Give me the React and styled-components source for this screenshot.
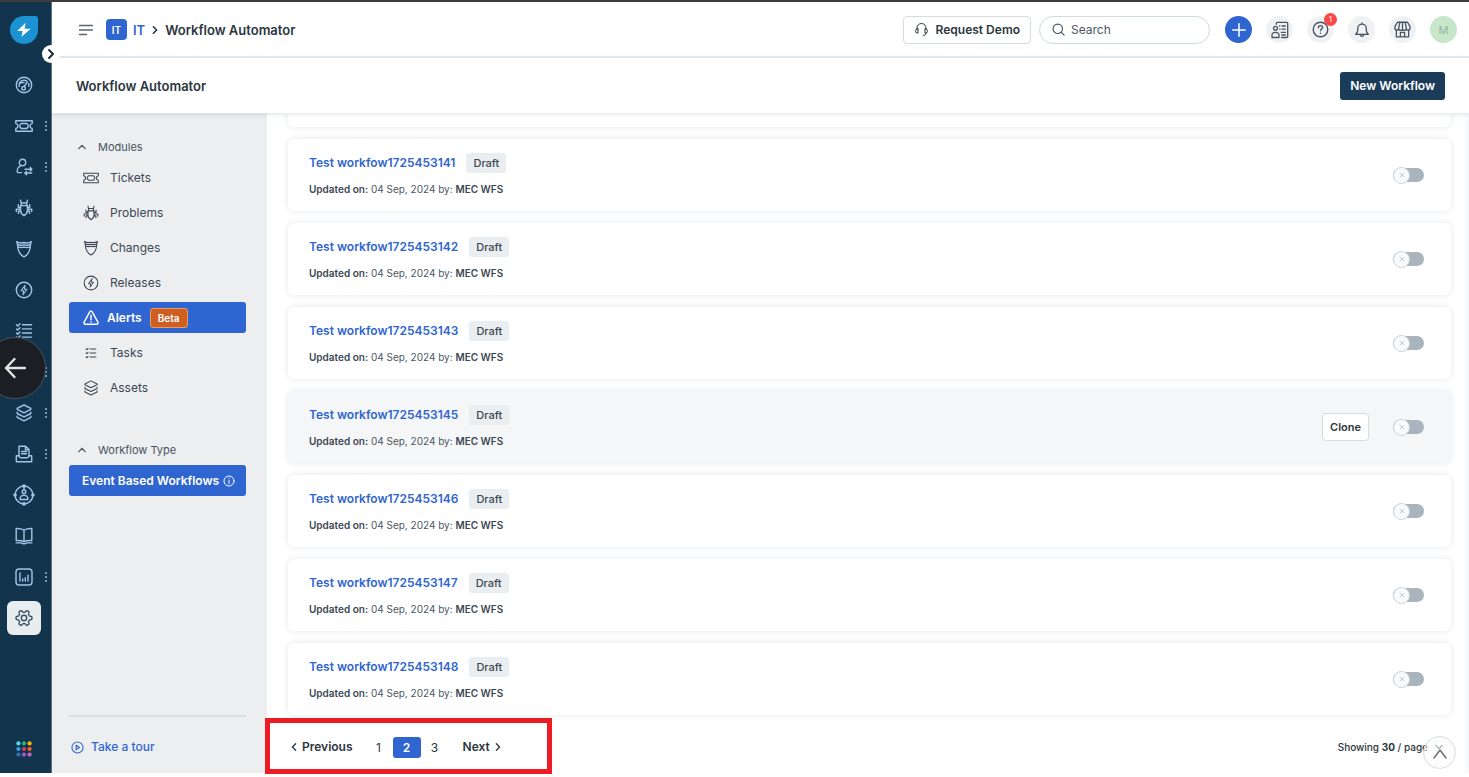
import React from "react";
import styled, { createGlobalStyle, css } from "styled-components";

const GlobalStyle = createGlobalStyle`
  *, *::before, *::after { box-sizing: border-box; }
  body {
    margin: 0;
    background: #fff;
    color: #2b3640;
    font-family: Inter, "Liberation Sans", sans-serif;
    font-size: 12px;
    line-height: 16px;
  }
  button, input { font: inherit; color: inherit; }
  button { cursor: pointer; padding: 0; margin: 0; border: 0; background: none; }
  a { text-decoration: none; color: inherit; }
  svg { display: block; flex: none; }
`;

const blue = "#2f65d0";
const navy = "#12344d";

/* ---------- icons ---------- */

const Svg = ({ size = 18, box = 18, w = 1.4, children, ...rest }) => (
  <svg
    width={size}
    height={size}
    viewBox={`0 0 ${box} ${box}`}
    fill="none"
    stroke="currentColor"
    strokeWidth={w}
    strokeLinecap="round"
    strokeLinejoin="round"
    aria-hidden="true"
    {...rest}
  >
    {children}
  </svg>
);

/* six rounded teeth around the centre of an 18-unit box */
const gearOutline = Array.from({ length: 120 }, (_, i) => {
  const a = (i / 120) * Math.PI * 2;
  const r = 6.8 + 1.2 * Math.tanh(2.4 * Math.cos(6 * a));
  return `${(9 + r * Math.cos(a)).toFixed(2)},${(9 + r * Math.sin(a)).toFixed(2)}`;
}).join(" ");

const shapes = {
  gauge: (
    <>
      <circle cx="9" cy="9" r="7.700" />
      <path d="M4.300 10.400A5 5 0 0 1 4.300 7.600 5 5 0 0 1 12 5.200M13.700 7.400a5 5 0 0 1 0 3M4.300 7.600c1.300-.9 3-1.200 4.700-1" />
      <circle cx="8.600" cy="12.300" r="1.800" />
      <path d="M9.300 10.500 12.200 6.200" />
    </>
  ),
  ticket: (
    <>
      <path d="M.8 3.700h16.400v2.700c-1.700.6-2.200 1.500-2.200 2.600s.5 2 2.200 2.600v2.700H.8v-2.700C2.500 11 3 10.100 3 9s-.5-2-2.200-2.600z" />
      <path d="M6 6.500h6c.1.700.5 1.100 1.100 1.300v2.400c-.6.2-1 .6-1.100 1.300H6c-.1-.7-.5-1.100-1.100-1.300V7.800C5.500 7.600 5.900 7.200 6 6.500z" />
    </>
  ),
  userSwap: (
    <>
      <circle cx="7.500" cy="4.400" r="3.200" />
      <path d="M6.300 7.600C3.700 8.400 2.200 10.600 2.200 13.400c0 .9.300 1.200 1 1.200h3.300" />
      <path d="M10 11.300h6.700M15.200 9.500l1.700 1.800-1.700 1.700M16.700 15H10M11.500 13.400 9.800 15l1.700 1.700" />
    </>
  ),
  bug: (
    <>
      <path d="M5.500 6.600h7v4.800c0 2.200-1.500 3.900-3.500 5.200-2-1.300-3.500-3-3.500-5.200z" />
      <path d="M6.200 6.500V4h5.600v2.500M6.200 4 5.600 1.300M11.800 4l.6-2.700" />
      <path d="M5.500 8.300H3.300V5.700M12.500 8.300h2.200V5.700M5.500 10.200H1.300v2.300M12.500 10.200h4.200v2.300M5.700 12.200H3.500v2.200M12.300 12.200h2.200v2.200" />
    </>
  ),
  shield: (
    <>
      <path d="M1.700 1.700C4 3 6.600 3.300 9 2.500c2.400.8 5 .5 7.300-.8-.3 1.200-.8 2-.9 3.300-.1 4.800-1.500 9.300-6.400 11.800C4.100 14.300 2.700 9.800 2.600 5c-.1-1.300-.6-2.100-.9-3.300z" />
      <path d="M2.500 4.500c2.200.8 4.400.9 6.500.3 2.100.6 4.300.5 6.500-.3M2.800 6.800c2.100.8 4.200.9 6.200.3 2 .6 4.100.5 6.200-.3" />
    </>
  ),
  bolt: (
    <>
      <circle cx="9" cy="9" r="7.700" />
      <path d="M10 4.300 6.100 9.800h2.500L8 13.700l3.900-5.500H9.400z" strokeWidth="1.100" />
    </>
  ),
  tasks: (
    <path d="M7.500 2.800h9M7.500 6.900h9M7.500 11h9M7.500 15.100h9M1.500 2.800l1.200 1.200L5 1.700M1.500 6.900l1.200 1.200L5 5.800M1.500 11l1.200 1.200L5 9.900M1.500 15.100l1.200 1.200L5 14" />
  ),
  taskLines: (
    <path d="M8 4.500h6.500M8 9h6.500M8 13.500h6.500M3.500 4.500l.8.800 1.400-1.500M3.500 9l.8.800 1.400-1.500M3.500 13.500l.8.800 1.400-1.500" />
  ),
  layers: (
    <>
      <path d="M9 1 15.800 4.400v1L9 8.800 2.200 5.400v-1z" />
      <path d="M2.200 8.300v1.200L9 12.900l6.800-3.400V8.300M2.200 12.200v1.200L9 16.900l6.800-3.500v-1.200" />
    </>
  ),
  printer: (
    <>
      <path d="M4 10.800V1.200h6.600L14 4.600v6.200M10.400 1.400v3.400h3.400M6.500 6.500h5M6.500 8.800h5" />
      <path d="M4 10.800H1.300v6h15.400v-6H14c-.2 1.300-.8 1.900-2 1.900H6c-1.200 0-1.900-.6-2-1.900z" />
    </>
  ),
  target: (
    <>
      <circle cx="9" cy="9" r="7.300" />
      <circle cx="9" cy="6.400" r="1.500" />
      <path d="M5.900 12.600v-.8c0-1.500 1.200-2.500 3.100-2.500s3.100 1 3.100 2.500v.8z" />
      <path d="M9 3.200v1" />
      <circle cx="9" cy="1.700" r=".9" fill="currentColor" />
      <circle cx="9" cy="16.300" r=".9" fill="currentColor" />
      <circle cx="1.700" cy="9" r=".9" fill="currentColor" />
      <circle cx="16.300" cy="9" r=".9" fill="currentColor" />
    </>
  ),
  book: (
    <>
      <path d="M9 3c-2-1.100-4.700-1.600-7.800-1.500v12c3.100-.1 5.800.2 7.800 1.200 2-1 4.700-1.300 7.800-1.200v-12C13.700 1.400 11 1.900 9 3zM9 3v11.500" />
      <path d="M1.200 15.900h5.600c.5 1.200 3.900 1.200 4.400 0h5.600" />
    </>
  ),
  chart: (
    <>
      <rect x="1" y="1" width="16" height="16" rx="3" />
      <path d="M5 5v8M7.700 11v2M10.300 9.800V13M13 7.200V13" />
    </>
  ),
  gear: (
    <>
      <circle cx="9" cy="9" r="2.700" />
      <polygon points={gearOutline} />
    </>
  ),
  warning: (
    <>
      <path d="M7.600 2.100 1.300 13.700c-.6 1.200 0 2.300 1.300 2.300h12.800c1.300 0 1.900-1.100 1.300-2.300L10.400 2.100c-.6-1.100-2.200-1.100-2.800 0z" />
      <path d="M9 6v5M9 13.200v.2" />
    </>
  ),
  headset: (
    <>
      <path d="M3.600 9V7.200a5.400 5.400 0 0 1 10.800 0V9" />
      <path d="M4.800 8.300v5H4a2.100 2.100 0 0 1-2.100-2.100v-.8A2.100 2.100 0 0 1 4 8.300zM13.200 8.300v5h.8a2.100 2.100 0 0 0 2.100-2.100v-.8A2.100 2.100 0 0 0 14 8.300zM14.400 13.300c0 1.800-1.200 2.700-3.400 2.700" />
    </>
  ),
  search: (
    <>
      <circle cx="8" cy="8" r="6.500" />
      <path d="m12.800 12.800 4 4" />
    </>
  ),
  plus: <path d="M9 2v14M2 9h14" />,
  contacts: (
    <>
      <path d="M5.300 3.300V2.500c0-.8.400-1.200 1.200-1.200h9c.8 0 1.200.4 1.200 1.200v12.800c0 .8-.4 1.200-1.200 1.200h-5" />
      <circle cx="4.500" cy="7.300" r="2" />
      <path d="M1 16.500v-2.200c0-1.800 1.300-3 3.500-3s3.500 1.200 3.500 3v2.200zM8.500 5h.3M11 5h3.300M8.800 8.200h.3M11 8.200h3.300M10.300 11.400h4M10.800 14h3.500" />
    </>
  ),
  help: (
    <>
      <circle cx="9" cy="9" r="7.700" />
      <path d="M6.800 7.100c0-1.300 1-2.200 2.200-2.200s2.200.8 2.200 2C11.200 8.400 9 8.500 9 10.300M9 12.900v.2" />
    </>
  ),
  bell: (
    <path d="M9 1v1.300M1.900 13.900h14.200c-1.500-1.400-2.300-2.600-2.300-5V7.200a4.800 4.800 0 0 0-9.600 0v1.700c0 2.400-.8 3.600-2.300 5zM7 14.200a2 2 0 0 0 4 0" />
  ),
  store: (
    <>
      <path d="M3.600 1.300h10.800L17 6v1.300a2 2 0 0 1-4 .6 2 2 0 0 1-4 0 2 2 0 0 1-4 0 2 2 0 0 1-4-.6V6zM6.200 1.300 5 7.500M11.800 1.300 13 7.500M9 1.300v6.200" />
      <path d="M2.500 9.800v7h13v-7M6.800 16.800V12h4.400v4.800" />
    </>
  ),
  play: (
    <>
      <circle cx="9" cy="9" r="7.700" />
      <path d="M7 5.800 12 9l-5 3.200z" />
    </>
  ),
  info: (
    <>
      <circle cx="9" cy="9" r="7.500" />
      <path d="M9 8.300V13M9 5.200v.3" />
    </>
  ),
};

const Icon = ({ name, ...rest }) => <Svg {...rest}>{shapes[name]}</Svg>;

const chevrons = {
  right: "m3 1 4 4-4 4",
  left: "M7 1 3 5l4 4",
  up: "m1 7 4-4 4 4",
  down: "m1 3 4 4 4-4",
};
const Chevron = ({ dir, size = 8, w = 1.6 }) => (
  <Svg size={size} box={10} w={w}>
    <path d={chevrons[dir]} />
  </Svg>
);

const LogoMark = () => (
  <svg width="28" height="28" viewBox="0 0 28 28" aria-hidden="true">
    <path d="M14 0h11a3 3 0 0 1 3 3v11A14 14 0 1 1 14 0z" fill="#1b93d3" />
    <path d="M15.600 6.800 7.200 15h5.400l-1.200 6L20.600 12.800h-6z" fill="#fff" />
  </svg>
);

const appDots = ["#4be0e6", "#21b573", "#ffb400", "#3c9df0", "#e43d57", "#f26522", "#2f6fb5", "#a557c9", "#c65fd0"];
const AppGrid = () => (
  <svg width="16" height="16" viewBox="0 0 16 16" aria-hidden="true">
    {appDots.map((c, i) => (
      <circle key={i} cx={2.400 + (i % 3) * 5.600} cy={2.400 + Math.floor(i / 3) * 5.600} r="2.100" fill={c} />
    ))}
  </svg>
);

/* ---------- shell ---------- */

const Page = styled.div`
  position: relative;
  display: flex;
  flex-direction: column;
  min-height: 100vh;
  padding-bottom: 4px;
  border-top: 2px solid #3d3d3d;
`;

const Shell = styled.div`
  flex: 1;
  display: flex;
`;

const Rail = styled.nav`
  position: relative;
  z-index: 3;
  display: flex;
  flex-direction: column;
  align-items: stretch;
  flex: none;
  width: 52px;
  background: ${navy};
  border-right: 1px solid #5b7488;
  color: #a3c4e6;
`;

const RailLogo = styled.a`
  height: 62px;
  padding: 14px 0 0 10px;
`;

const RailLink = styled.a`
  display: flex;
  align-items: center;
  height: 41px;
  padding-left: 7px;
`;

const RailTile = styled.span`
  display: grid;
  place-items: center;
  width: 34px;
  height: 34px;
  border-radius: 6px;
  ${(p) => p.$active && css`background: #e9edf0; color: #36536a;`}
`;

const MoreDots = styled.span`
  display: grid;
  gap: 2px;
  margin-left: 4px;
  &::before, &::after, i { content: ""; width: 2px; height: 2px; background: #7696b0; }
`;

const RailApps = styled.button`
  display: grid;
  justify-content: start;
  margin-top: auto;
  padding: 0 0 16px 16px;
`;

const RailExpand = styled.button`
  position: absolute;
  top: 43px;
  right: -9px;
  display: grid;
  place-items: center;
  width: 18px;
  height: 18px;
  border-radius: 50%;
  background: #fff;
  color: #1a2530;
`;

const BackButton = styled.button`
  position: absolute;
  z-index: 4;
  top: 335px;
  left: -16px;
  display: grid;
  place-items: center;
  width: 62px;
  height: 62px;
  border: 1px solid #43505a;
  border-radius: 50%;
  background: #1b1e22;
  color: #e4e4e4;
`;

const Column = styled.div`
  flex: 1;
  min-width: 0;
  display: flex;
  flex-direction: column;
`;

const TopBar = styled.header`
  display: flex;
  align-items: center;
  height: 56px;
  padding: 1px 12px 0 27px;
  border-bottom: 2px solid #e6edf2;
`;

const Crumbs = styled.div`
  display: flex;
  align-items: center;
  gap: 6px;
  margin-left: 13px;
  font-size: 13px;
  font-weight: 600;
`;

const Workspace = styled.span`
  display: grid;
  place-items: center;
  width: 21px;
  height: 21px;
  border-radius: 4px;
  background: ${blue};
  color: #fff;
  font-size: 10px;
`;

const CrumbLink = styled.a`
  color: ${blue};
`;

const TopTools = styled.div`
  display: flex;
  align-items: center;
  gap: 14px;
  margin-left: auto;
`;

const OutlineButton = styled.button`
  display: flex;
  align-items: center;
  justify-content: center;
  gap: 7px;
  height: 28px;
  padding: 0 ${(p) => p.$pad || 10}px;
  border: 1px solid #d5dde3;
  border-radius: 4px;
  background: #fff;
  font-size: ${(p) => p.$size || 12}px;
  font-weight: 600;
`;

const SearchBox = styled.label`
  display: flex;
  align-items: center;
  gap: 6px;
  width: 171px;
  height: 28px;
  margin: 0 1px 0 -6px;
  padding: 0 12px;
  border: 1px solid #cfd9e0;
  border-radius: 14px;
  color: #4b5864;
  input {
    flex: 1;
    min-width: 0;
    padding: 0;
    border: 0;
    outline: 0;
    background: none;
    &::placeholder { color: #4b5864; opacity: 1; }
  }
`;

const RoundButton = styled.button`
  position: relative;
  display: grid;
  place-items: center;
  width: 27px;
  height: 27px;
  border-radius: 50%;
  background: ${(p) => p.$bg || "#eff1f2"};
  color: ${(p) => p.$fg || "#475461"};
  font-size: 11px;
`;

const Count = styled.span`
  position: absolute;
  top: -3px;
  right: -3px;
  width: 13px;
  height: 13px;
  border-radius: 50%;
  background: #fb4848;
  color: #fff;
  font-size: 8px;
  line-height: 13px;
  text-align: center;
`;

const TitleBar = styled.div`
  position: relative;
  z-index: 2;
  display: flex;
  align-items: center;
  justify-content: space-between;
  height: 55px;
  padding: 0 24px;
  background: #fff;
  box-shadow: 0 1px 5px rgba(24, 50, 71, 0.15);
`;

const Title = styled.h1`
  margin: 0;
  font-size: 13px;
  font-weight: 600;
`;

const PrimaryButton = styled.button`
  height: 28px;
  padding: 0 10px;
  border-radius: 3px;
  background: #1b3c58;
  color: #fff;
  font-weight: 600;
`;

const Body = styled.div`
  flex: 1;
  display: flex;
`;

/* ---------- modules panel ---------- */

const Panel = styled.aside`
  display: flex;
  flex-direction: column;
  flex: none;
  width: 215px;
  padding: 26px 21px 0 17px;
  background: #eceef0;
`;

const GroupToggle = styled.button`
  display: flex;
  align-items: center;
  gap: 12px;
  height: 16px;
  margin-bottom: 7px;
  padding-left: 9px;
  color: #475461;
  font-size: 11px;
`;

const ModuleList = styled.div`
  display: flex;
  flex-direction: column;
  gap: 4px;
  margin-bottom: 39px;
`;

const ModuleLink = styled.a`
  display: flex;
  align-items: center;
  gap: 11px;
  height: 31px;
  padding-left: 14px;
  border-radius: 3px;
  color: #3b4854;
  ${(p) => p.$active && css`
    gap: 8px;
    background: ${blue};
    color: #fff;
    font-weight: 600;
  `}
`;

const Beta = styled.span`
  padding: 1px 7px;
  border: 1px solid #eb9a62;
  border-radius: 3px;
  background: #cf5f21;
  font-size: 10px;
`;

const TypeLink = styled.a`
  display: flex;
  align-items: center;
  gap: 4px;
  height: 31px;
  padding-left: 13px;
  border-radius: 3px;
  background: ${blue};
  color: #fff;
  font-weight: 600;
`;

const PanelFoot = styled.div`
  height: 58px;
  margin-top: auto;
  padding-top: 22px;
  border-top: 2px solid #d9dee4;
`;

const TourLink = styled.a`
  display: inline-flex;
  align-items: center;
  gap: 7px;
  padding-left: 2px;
  color: ${blue};
  font-weight: 500;
`;

/* ---------- workflows ---------- */

const Main = styled.main`
  flex: 1;
  min-width: 0;
  display: flex;
  flex-direction: column;
  padding: 0 18px 0 21px;
  box-shadow: inset -6px 0 6px -4px #f2f4f5;
`;

const Cards = styled.ul`
  display: flex;
  flex-direction: column;
  gap: 12px;
  margin: 0;
  padding: 0;
  list-style: none;
`;

const cardFrame = css`
  box-shadow: 0 0 6px rgba(24, 50, 71, 0.12);
  background: #fff;
`;

const CardTail = styled.div`
  ${cardFrame}
  height: 14px;
  margin-bottom: 12px;
  border-radius: 0 0 6px 6px;
`;

const Card = styled.li`
  ${cardFrame}
  display: flex;
  align-items: center;
  height: 72px;
  padding: 0 27px 0 21px;
  border-radius: 6px;
  ${(p) => p.$hover && css`background: #f5f6f8;`}
`;

const CardText = styled.div`
  flex: 1;
  display: grid;
  gap: 8px;
`;

const CardHead = styled.div`
  display: flex;
  align-items: center;
  gap: 11px;
`;

const CardTitle = styled.a`
  color: ${blue};
  font-weight: 600;
`;

const Status = styled.span`
  padding: 2px 7px;
  border-radius: 3px;
  background: #ebeef0;
  color: #3b4854;
  font-size: 11px;
  font-weight: 500;
`;

const Meta = styled.p`
  margin: 0;
  color: #4b5864;
  font-size: 10px;
  b { color: #3b4854; font-weight: 600; }
`;

const Switch = styled.label`
  position: relative;
  display: flex;
  align-items: center;
  width: 31px;
  height: 14px;
  margin-left: 24px;
  border-radius: 7px;
  background: #a9b4bf;
  input { position: absolute; inset: 0; margin: 0; opacity: 0; }
`;

const Knob = styled.span`
  flex: none;
  display: grid;
  place-items: center;
  width: 17px;
  height: 17px;
  border: 1px solid #ccd2d9;
  border-radius: 50%;
  background: #f9fafb;
  color: #c3cad1;
`;

const Pager = styled.div`
  position: relative;
  flex: 1;
  display: flex;
  align-items: center;
  justify-content: space-between;
  min-height: 58px;
  padding-top: 6px;
`;

const PageNav = styled.nav`
  display: flex;
  align-items: center;
`;

const StepLink = styled.a`
  display: flex;
  align-items: center;
  gap: 4px;
  padding: 0 2px;
  font-weight: 600;
`;

const Numbers = styled.div`
  display: flex;
  margin: 0 12px 0 10px;
`;

const NumberLink = styled.a`
  width: 28px;
  height: 21px;
  border-radius: 3px;
  line-height: 21px;
  text-align: center;
  ${(p) => p.$active && css`background: ${blue}; color: #fff; font-weight: 600;`}
`;

const Highlight = styled.div`
  position: absolute;
  z-index: 5;
  left: -23px;
  bottom: -1px;
  width: 287px;
  height: 56px;
  border: 5px solid #ed1c24;
  pointer-events: none;
`;

const PageSize = styled.button`
  display: flex;
  align-items: center;
  gap: 7px;
  padding-right: 8px;
  font-size: 10px;
  font-weight: 500;
`;

const ToTop = styled.button`
  position: absolute;
  right: -5px;
  bottom: 4px;
  display: grid;
  place-items: center;
  width: 33px;
  height: 33px;
  border: 1px solid #d9dcdf;
  border-radius: 50%;
  background: rgba(250, 250, 250, 0.6);
  color: #777;
`;

const rail = [
  ["Dashboard", "gauge"],
  ["Tickets", "ticket", true],
  ["Requesters", "userSwap", true],
  ["Problems", "bug"],
  ["Changes", "shield"],
  ["Releases", "bolt"],
  ["Tasks", "tasks"],
  ["Alerts", "warning", true],
  ["Assets", "layers", true],
  ["Purchases", "printer", true],
  ["Team", "target"],
  ["Solutions", "book"],
  ["Analytics", "chart", true],
  ["Admin", "gear"],
];

const modules = [
  ["Tickets", "ticket"],
  ["Problems", "bug"],
  ["Changes", "shield"],
  ["Releases", "bolt"],
  ["Alerts", "warning"],
  ["Tasks", "taskLines"],
  ["Assets", "layers"],
];

const workflows = [141, 142, 143, 145, 146, 147, 148];

export default function App() {
  return (
    <Page>
      <GlobalStyle />
      <Shell>
        <Rail aria-label="Main">
          <RailLogo href="#" aria-label="Home"><LogoMark /></RailLogo>
          {rail.map(([label, icon, more]) => (
            <RailLink key={label} href="#" aria-label={label}>
              <RailTile $active={icon === "gear"}>
                <Icon name={icon} size={icon === "target" ? 22 : 18} w={icon === "target" ? 1.2 : 1.4} />
              </RailTile>
              {more && <MoreDots><i /></MoreDots>}
            </RailLink>
          ))}
          <RailApps aria-label="Apps"><AppGrid /></RailApps>
          <RailExpand aria-label="Expand menu"><Chevron dir="right" size={10} w={1.8} /></RailExpand>
        </Rail>
        <Column>
          <TopBar>
            <button aria-label="Toggle menu">
              <Svg size={14} box={14} w={1.4} color="#5a6570"><path d="M.5 2.500h13M.5 7h13M.5 11.500h7" /></Svg>
            </button>
            <Crumbs>
              <Workspace>IT</Workspace>
              <CrumbLink href="#">IT</CrumbLink>
              <Chevron dir="right" w={2} />
              <span>Workflow Automator</span>
            </Crumbs>
            <TopTools>
              <OutlineButton><Icon name="headset" size={15} w={1.2} />Request Demo</OutlineButton>
              <SearchBox>
                <Icon name="search" size={13} w={1.6} />
                <input type="text" placeholder="Search" aria-label="Search" />
              </SearchBox>
              <RoundButton $bg={blue} $fg="#fff" aria-label="New"><Icon name="plus" size={16} w={1.700} /></RoundButton>
              <RoundButton aria-label="Contacts"><Icon name="contacts" w={1.300} /></RoundButton>
              <RoundButton aria-label="Help"><Icon name="help" size={17} w={1.500} /><Count>1</Count></RoundButton>
              <RoundButton aria-label="Notifications"><Icon name="bell" size={16} w={1.500} /></RoundButton>
              <RoundButton aria-label="Marketplace"><Icon name="store" size={17} w={1.400} /></RoundButton>
              <RoundButton $bg="#c8e6c9" $fg="#97b79b">M</RoundButton>
            </TopTools>
          </TopBar>
          <TitleBar>
            <Title>Workflow Automator</Title>
            <PrimaryButton>New Workflow</PrimaryButton>
          </TitleBar>
          <Body>
            <Panel>
              <GroupToggle><Chevron dir="up" />Modules</GroupToggle>
              <ModuleList>
                {modules.map(([label, icon]) => {
                  const active = label === "Alerts";
                  return (
                    <ModuleLink key={label} href="#" $active={active}>
                      <Icon name={icon} size={16} w={active ? 1.6 : 1.2} />
                      {label}
                      {active && <Beta>Beta</Beta>}
                    </ModuleLink>
                  );
                })}
              </ModuleList>
              <GroupToggle><Chevron dir="up" />Workflow Type</GroupToggle>
              <TypeLink href="#">Event Based Workflows<Icon name="info" size={12} w={1.500} /></TypeLink>
              <PanelFoot>
                <TourLink href="#"><Icon name="play" size={13} w={1.500} />Take a tour</TourLink>
              </PanelFoot>
            </Panel>
            <Main>
              <CardTail />
              <Cards>
                {workflows.map((n) => (
                  <Card key={n} $hover={n === 145}>
                    <CardText>
                      <CardHead>
                        <CardTitle href="#">Test workfow1725453{n}</CardTitle>
                        <Status>Draft</Status>
                      </CardHead>
                      <Meta><b>Updated on:</b> 04 Sep, 2024 by: <b>MEC WFS</b></Meta>
                    </CardText>
                    {n === 145 && <OutlineButton $pad={7} $size={11}>Clone</OutlineButton>}
                    <Switch>
                      <input type="checkbox" aria-label={`Enable workflow ${n}`} />
                      <Knob><Svg size={6} box={6} w={1}><path d="m1 1 4 4M5 1 1 5" /></Svg></Knob>
                    </Switch>
                  </Card>
                ))}
              </Cards>
              <Pager>
                <PageNav aria-label="Pagination">
                  <StepLink href="#"><Chevron dir="left" />Previous</StepLink>
                  <Numbers>
                    {[1, 2, 3].map((n) => (
                      <NumberLink key={n} href="#" $active={n === 2}>{n}</NumberLink>
                    ))}
                  </Numbers>
                  <StepLink href="#">Next<Chevron dir="right" /></StepLink>
                </PageNav>
                <PageSize aria-haspopup="listbox"><span>Showing <b>30</b> / page</span><Chevron dir="down" /></PageSize>
                <Highlight />
                <ToTop aria-label="Back to top">
                  <Svg size={16} box={16} w={1.600}><path d="m2 13 6-8 6 8" /></Svg>
                </ToTop>
              </Pager>
            </Main>
          </Body>
        </Column>
      </Shell>
      <BackButton aria-label="Back">
        <Svg size={22} box={22} w={2.400}><path d="M21 11H2M10.500 2 2 11l8.500 9" /></Svg>
      </BackButton>
    </Page>
  );
}
